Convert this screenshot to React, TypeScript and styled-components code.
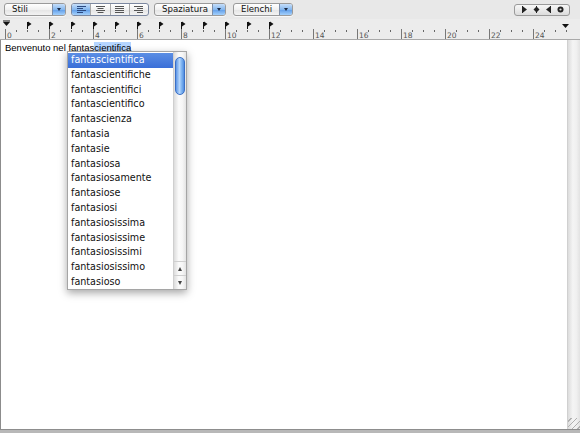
import React from "react";
import styled, { createGlobalStyle } from "styled-components";

const Global = createGlobalStyle`
  html, body { margin: 0; padding: 0; background: #ffffff; }
  body { width: 580px; height: 433px; overflow: hidden; font-family: "DejaVu Sans", sans-serif; }
`;

const Window = styled.div`
  width: 580px;
  height: 433px;
  display: flex;
  flex-direction: column;
  background: #ffffff;
  overflow: hidden;
`;

const Toolbar = styled.div`
  height: 19px;
  flex: none;
  display: flex;
  align-items: center;
  padding: 0 10px 0 4px;
  background: #e8e8e8;
`;

const Popup = styled.div<{ $w: number; $ml?: number }>`
  width: ${(p) => p.$w}px;
  margin-left: ${(p) => p.$ml ?? 0}px;
  height: 13px;
  box-sizing: border-box;
  border: 1px solid #9a9a9a;
  border-radius: 3px;
  display: flex;
  overflow: hidden;
  background: linear-gradient(#ffffff, #f1f1f1 50%, #e4e4e4 51%, #f3f3f3);
  box-shadow: 0 1px 0 rgba(255, 255, 255, 0.7);
`;

const PopupLabel = styled.div`
  flex: 1;
  padding-left: 7px;
  font-size: 8.6px;
  line-height: 11px;
  color: #111;
`;

const PopupArrow = styled.div`
  width: 12px;
  flex: none;
  border-left: 1px solid #7d8ea8;
  background: linear-gradient(#c5defa, #86b8ef 50%, #5e9ce8 51%, #a4d0fb);
  display: flex;
  align-items: center;
  justify-content: center;
`;

const Tri = styled.div`
  width: 0;
  height: 0;
  border-left: 2.5px solid transparent;
  border-right: 2.5px solid transparent;
  border-top: 3px solid #1c2a44;
`;

const Segmented = styled.div`
  width: 78px;
  margin-left: 5px;
  height: 13px;
  box-sizing: border-box;
  border: 1px solid #7c88a0;
  border-radius: 3px;
  display: flex;
  overflow: hidden;
  background: linear-gradient(#ffffff, #f1f1f1 50%, #e4e4e4 51%, #f3f3f3);
`;

const Segment = styled.div<{ $on?: boolean; $last?: boolean }>`
  flex: 1;
  display: flex;
  align-items: center;
  justify-content: center;
  border-right: ${(p) => (p.$last ? "none" : "1px solid #a8a8a8")};
  background: ${(p) =>
    p.$on ? "linear-gradient(#c5defa, #86b8ef 50%, #5e9ce8 51%, #a4d0fb)" : "transparent"};
`;

const Spacer = styled.div`
  flex: 1;
`;

const TabWell = styled.div`
  width: 56px;
  height: 12px;
  box-sizing: border-box;
  border: 1px solid #9a9a9a;
  border-radius: 3px;
  background: linear-gradient(#f7f7f7, #dcdcdc);
  display: flex;
  align-items: center;
  justify-content: space-around;
  padding: 0 3px;
`;

const RulerBar = styled.div`
  height: 21px;
  flex: none;
  background: #ececec;
  border-bottom: 1px solid #a9a9a9;
  box-sizing: border-box;
`;

const Main = styled.div`
  flex: 1;
  display: flex;
  min-height: 0;
`;

const TextArea = styled.div`
  flex: 1;
  position: relative;
  padding: 2px 4px;
  border-left: 1px solid #8c8c8c;
  font-family: "Liberation Sans", Arial, sans-serif;
  font-size: 9.5px;
  line-height: 12px;
  color: #000;
`;

const Marked = styled.span`
  background: #b5d5ff;
`;

const Scroller = styled.div`
  width: 12px;
  flex: none;
  display: flex;
  flex-direction: column;
  background: linear-gradient(90deg, #dcdcdc, #f4f4f4 40%, #f0f0f0 70%, #e2e2e2);
  border-left: 1px solid #d0d0d0;
`;

const ScrollFill = styled.div`
  flex: 1;
`;

const Grip = styled.div`
  height: 11px;
  background: repeating-linear-gradient(135deg, transparent 0 2px, #b0b0b0 2px 3px, transparent 3px 4px);
`;

const BottomBar = styled.div`
  height: 3px;
  flex: none;
  border-top: 1px solid #8d8d8d;
  background: #b8b8b8;
`;

const Completion = styled.div`
  position: absolute;
  left: 66px;
  top: 11px;
  width: 120px;
  height: 239px;
  box-sizing: border-box;
  border: 1px solid #a5a5a5;
  background: #ffffff;
  display: flex;
  box-shadow: 0 3px 8px rgba(0, 0, 0, 0.35);
`;

const List = styled.div`
  flex: 1;
  padding-top: 1px;
  font-family: "DejaVu Sans", sans-serif;
  font-size: 9.6px;
`;

const Row = styled.div<{ $sel?: boolean }>`
  height: 14.8px;
  line-height: 14.8px;
  padding-left: 3px;
  color: ${(p) => (p.$sel ? "#ffffff" : "#111111")};
  background: ${(p) => (p.$sel ? "linear-gradient(#5b8ee4, #3a6fd8)" : "transparent")};
`;

const VScroll = styled.div`
  width: 12px;
  flex: none;
  display: flex;
  flex-direction: column;
  background: linear-gradient(90deg, #dcdcdc, #fbfbfb 40%, #f6f6f6 70%, #e4e4e4);
  border-left: 1px solid #cfcfcf;
`;

const Thumb = styled.div`
  margin: 5px 1px 0 1px;
  height: 38px;
  border-radius: 5px;
  border: 1px solid #3a6fc6;
  box-sizing: border-box;
  background: linear-gradient(90deg, #5c95e6, #b7d7fb 45%, #8fc0f6 60%, #4f8de0);
`;

const Track = styled.div`
  flex: 1;
`;

const ArrowBtn = styled.div`
  height: 13px;
  display: flex;
  align-items: center;
  justify-content: center;
  border-top: 1px solid #cfcfcf;
`;

const ArrowUp = styled.div`
  width: 0;
  height: 0;
  border-left: 2.5px solid transparent;
  border-right: 2.5px solid transparent;
  border-bottom: 4px solid #444;
`;

const ArrowDown = styled.div`
  width: 0;
  height: 0;
  border-left: 2.5px solid transparent;
  border-right: 2.5px solid transparent;
  border-top: 4px solid #444;
`;

const AlignIcon = ({ kind }: { kind: "left" | "center" | "justify" | "right" }) => {
  const widths = [9, 6, 9, 6];
  return (
    <svg width="9" height="7" viewBox="0 0 9 7">
      {widths.map((w, i) => {
        const len = kind === "justify" ? 9 : w;
        let x = 0;
        if (kind === "center") x = (9 - len) / 2;
        if (kind === "right") x = 9 - len;
        return (
          <rect key={i} x={x} y={i * 2} width={len} height={1} fill={kind === "left" ? "#2b4a82" : "#555"} />
        );
      })}
    </svg>
  );
};

const TabIcon = ({ kind }: { kind: "left" | "center" | "right" | "decimal" }) => (
  <svg width="7" height="7" viewBox="0 0 7 7">
    {kind === "left" && (
      <>
        <rect x="1" y="0" width="1" height="7" fill="#222" />
        <polygon points="2,0.5 6,3.5 2,6.5" fill="#222" />
      </>
    )}
    {kind === "center" && (
      <>
        <rect x="3" y="0" width="1" height="7" fill="#222" />
        <polygon points="3.5,0.5 6.5,3.5 3.5,6.5 0.5,3.5" fill="#222" />
      </>
    )}
    {kind === "right" && (
      <>
        <rect x="5" y="0" width="1" height="7" fill="#222" />
        <polygon points="5,0.5 1,3.5 5,6.5" fill="#222" />
      </>
    )}
    {kind === "decimal" && (
      <>
        <circle cx="3.5" cy="3.5" r="3" fill="#222" />
        <circle cx="3.5" cy="3.5" r="1.1" fill="#ddd" />
      </>
    )}
  </svg>
);

const RulerDrawing = () => {
  const minor: number[] = [];
  for (let m = 0; m <= 51; m++) {
    if (m % 4 !== 0) minor.push(5 + 11 * m);
  }
  const majors: number[] = [];
  for (let k = 0; k <= 12; k++) majors.push(k);
  const tabs: number[] = [];
  for (let k = 1; k <= 12; k++) tabs.push(5 + 22 * k);
  return (
    <svg width="580" height="20" viewBox="0 0 580 20">
      {minor.map((x) => (
        <rect key={"m" + x} x={x} y={11} width="1" height="2" fill="#666" />
      ))}
      {majors.map((k) => {
        const x = 5 + 44 * k;
        return (
          <g key={"M" + k}>
            <rect x={x} y={10} width="1" height="10" fill="#777" />
            <text x={x + 2} y={18.5} fontSize="7.5" fontFamily="DejaVu Sans, sans-serif" fill="#555">
              {2 * k}
            </text>
          </g>
        );
      })}
      {tabs.map((x) => (
        <g key={"t" + x}>
          <rect x={x} y={3} width="1" height="7" fill="#111" />
          <polygon points={`${x + 1},2.5 ${x + 4.5},5 ${x + 1},7.5`} fill="#111" />
        </g>
      ))}
      <rect x="3" y="1.5" width="7" height="1" fill="#111" />
      <polygon points="3,3 10,3 6.5,7" fill="#111" />
      <polygon points="562,5 569,5 565.5,9" fill="#111" />
    </svg>
  );
};

const words = [
  "fantascientifica",
  "fantascientifiche",
  "fantascientifici",
  "fantascientifico",
  "fantascienza",
  "fantasia",
  "fantasie",
  "fantasiosa",
  "fantasiosamente",
  "fantasiose",
  "fantasiosi",
  "fantasiosissima",
  "fantasiosissime",
  "fantasiosissimi",
  "fantasiosissimo",
  "fantasioso",
];

export default function App() {
  return (
    <>
      <Global />
      <Window>
        <Toolbar>
          <Popup $w={62}>
            <PopupLabel>Stili</PopupLabel>
            <PopupArrow>
              <Tri />
            </PopupArrow>
          </Popup>
          <Segmented>
            <Segment $on>
              <AlignIcon kind="left" />
            </Segment>
            <Segment>
              <AlignIcon kind="center" />
            </Segment>
            <Segment>
              <AlignIcon kind="justify" />
            </Segment>
            <Segment $last>
              <AlignIcon kind="right" />
            </Segment>
          </Segmented>
          <Popup $w={72} $ml={5}>
            <PopupLabel>Spaziatura</PopupLabel>
            <PopupArrow>
              <Tri />
            </PopupArrow>
          </Popup>
          <Popup $w={60} $ml={7}>
            <PopupLabel>Elenchi</PopupLabel>
            <PopupArrow>
              <Tri />
            </PopupArrow>
          </Popup>
          <Spacer />
          <TabWell>
            <TabIcon kind="left" />
            <TabIcon kind="center" />
            <TabIcon kind="right" />
            <TabIcon kind="decimal" />
          </TabWell>
        </Toolbar>
        <RulerBar>
          <RulerDrawing />
        </RulerBar>
        <Main>
          <TextArea>
            Benvenuto nel fantas<Marked>cientifica</Marked>
            <Completion>
              <List>
                {words.map((w, i) => (
                  <Row key={w} $sel={i === 0}>
                    {w}
                  </Row>
                ))}
              </List>
              <VScroll>
                <Thumb />
                <Track />
                <ArrowBtn>
                  <ArrowUp />
                </ArrowBtn>
                <ArrowBtn>
                  <ArrowDown />
                </ArrowBtn>
              </VScroll>
            </Completion>
          </TextArea>
          <Scroller>
            <ScrollFill />
            <Grip />
          </Scroller>
        </Main>
        <BottomBar />
      </Window>
    </>
  );
}
